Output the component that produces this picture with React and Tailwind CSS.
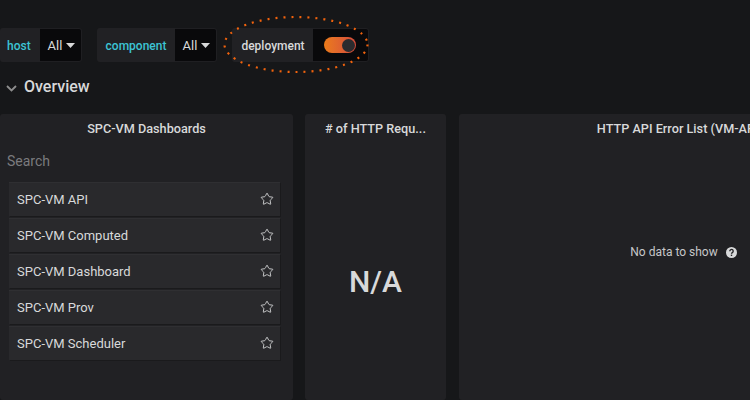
import { Star } from "lucide-react"

const dashboards = [
  "SPC-VM API",
  "SPC-VM Computed",
  "SPC-VM Dashboard",
  "SPC-VM Prov",
  "SPC-VM Scheduler",
]

const Caret = () => (
  <svg width="9" height="5" viewBox="0 0 9 5" className="ml-[4px]">
    <path d="M0 0h9L4.5 5z" fill="#d8d9da" />
  </svg>
)

function Variable({ label, labelClass, width, className = "" }) {
  return (
    <div className={`flex h-[34px] ${className}`}>
      <div className={`flex items-center justify-center h-full pt-[1px] bg-[#212124] rounded-l-[3px] text-[12px] font-medium ${labelClass} ${width}`}>
        {label}
      </div>
      <div className="flex items-center justify-center w-[42px] h-full pt-[1px] pl-[2px] bg-[#09090b] border border-[#1f1f22] border-l-0 rounded-r-[3px] text-[#d8d9da] text-[13px]">
        All
        <Caret />
      </div>
    </div>
  )
}

function Panel({ title, className = "", children }) {
  return (
    <div className={`flex flex-col h-full bg-[#212124] rounded-[3px] ${className}`}>
      <div className="h-[30px] pt-[7px] text-center text-[12.7px] leading-[16px] font-medium text-[#d8d9da] whitespace-nowrap overflow-hidden">
        {title}
      </div>
      {children}
    </div>
  )
}

export default function App() {
  return (
    <div
      className="relative w-[750px] h-[400px] overflow-hidden bg-[#161719]"
      style={{ fontFamily: "Roboto, sans-serif" }}
    >
      {/* variables */}
      <div className="flex items-center h-[34px] mt-[28px] absolute left-0 top-0">
        <Variable label="host" labelClass="text-[#3cc4d4] pl-[7px] !justify-start" width="w-[40px]" />
        <Variable label="component" labelClass="text-[#3cc4d4]" width="w-[78px]" className="ml-[15px]" />
        <div className="flex h-[34px] ml-[15px]">
          <div className="flex items-center justify-center w-[81px] h-full pt-[1px] pl-[1px] bg-[#212124] rounded-l-[3px] text-[12px] font-medium text-[#d8d9da]">
            deployment
          </div>
          <div className="flex items-center justify-center w-[56px] h-full pr-[2px] bg-[#09090b] border border-[#1f1f22] border-l-0 rounded-r-[3px]">
            <div className="flex items-center justify-end w-[32px] h-[16px] pr-[1px] rounded-full bg-gradient-to-r from-[#eb7b18] to-[#d44a3a]">
              <div className="w-[13px] h-[13px] rounded-full bg-[#2b2b2e]" />
            </div>
          </div>
        </div>
      </div>

      {/* annotation */}
      <svg width="750" height="100" className="absolute left-0 top-0 pointer-events-none">
        <ellipse
          cx="296"
          cy="44.5"
          rx="71.5"
          ry="27.5"
          fill="none"
          stroke="#f2630d"
          strokeWidth="2.2"
          strokeDasharray="2 6"
        />
      </svg>

      {/* row title */}
      <div className="flex items-center absolute left-[6px] top-[77px] h-[20px]">
        <svg width="11" height="7" viewBox="0 0 11 7" className="mt-[3px]">
          <path d="M1 1l4.5 4.5L10 1" fill="none" stroke="#8e8e8e" strokeWidth="1.8" />
        </svg>
        <span className="ml-[7px] text-[16px] font-medium text-[#d8d9da]">Overview</span>
      </div>

      {/* panels */}
      <div className="flex pt-[114px] h-full">
        <Panel title="SPC-VM Dashboards" className="w-[293px] shrink-0">
          <div className="pl-[7px] h-[38px] text-[14px] leading-[34px] text-[#7b7b7e]">Search</div>
          <div className="flex flex-col gap-[2px] pl-[9px] pr-[13px]">
            {dashboards.map((name) => (
              <div
                key={name}
                className="flex items-center justify-between h-[34px] pl-[8px] pr-[6px] bg-[#29292c] border-t border-[#2f2f32] shadow-[1px_1px_0_#1a1a1c] text-[13px] text-[#d8d9da]"
              >
                {name}
                <Star size={14} color="#d8d9da" strokeWidth={1.5} className="-mt-[1px]" />
              </div>
            ))}
          </div>
        </Panel>
        <Panel title="# of HTTP Requ..." className="w-[141px] shrink-0 ml-[12px]">
          <div className="flex justify-center pt-[120px] text-[30px] leading-[36px] font-medium text-[#d8d9da]">
            N/A
          </div>
        </Panel>
        <Panel title={"HTTP API Error List (VM-API)"} className="w-[442px] shrink-0 ml-[13px]">
          <div className="flex items-center justify-center pt-[93px] h-[123px] pl-[7px] text-[12px] text-[#c7c7c9]">
            No data to show
            <svg width="11" height="11" viewBox="0 0 11 11" className="ml-[8px]">
              <circle cx="5.5" cy="5.5" r="5.5" fill="#d8d9da" />
              <path d="M3.8 4.2a1.7 1.7 0 1 1 2.6 1.4c-.6.4-.9.6-.9 1.2" fill="none" stroke="#212124" strokeWidth="1.3" />
              <rect x="4.8" y="7.6" width="1.4" height="1.4" fill="#212124" />
            </svg>
          </div>
        </Panel>
      </div>
    </div>
  )
}
